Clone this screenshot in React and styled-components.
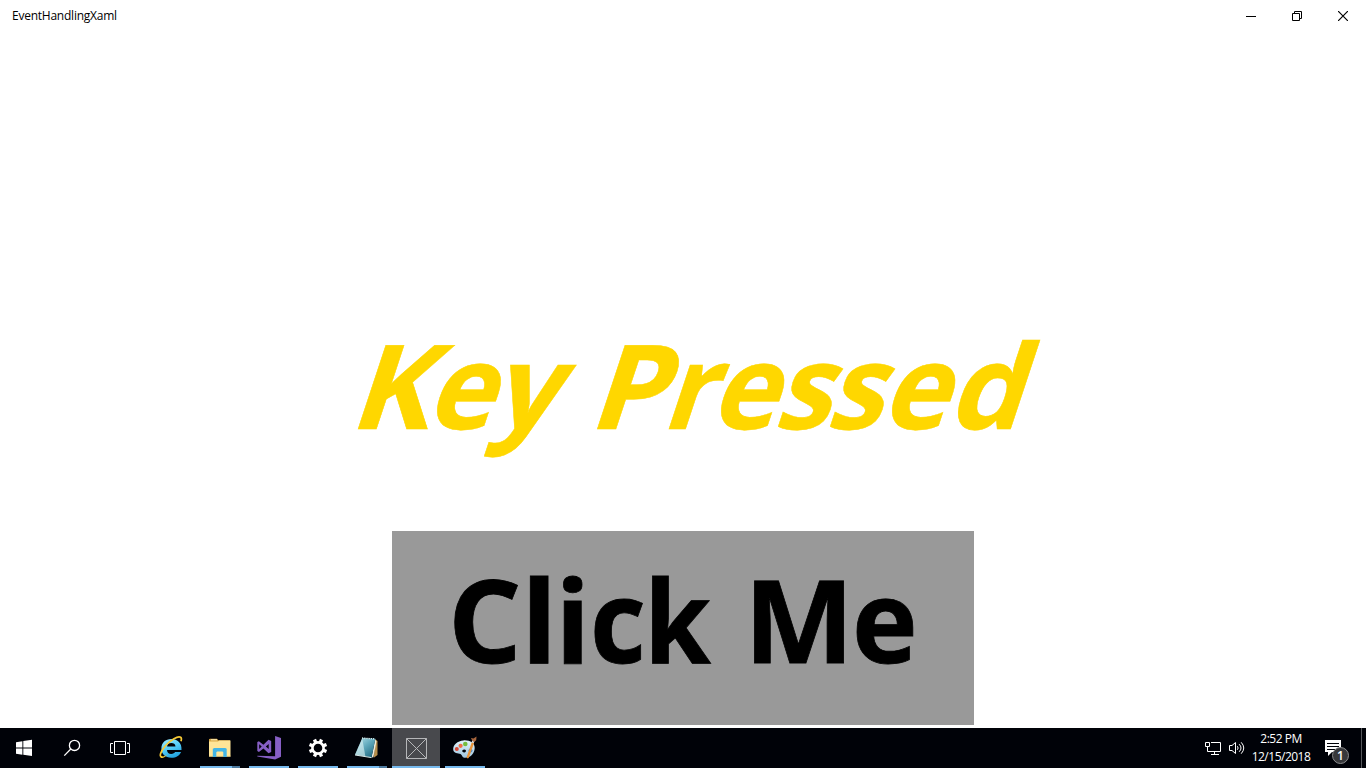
import React from "react";
import styled, { createGlobalStyle } from "styled-components";

const Global = createGlobalStyle`
  body { margin: 0; background: #fff; overflow: hidden; }
  * { box-sizing: border-box; }
`;

const Desktop = styled.div`
  width: 1366px;
  height: 768px;
  display: flex;
  flex-direction: column;
  background: #fff;
  color: #000;
  font-family: "Open Sans", "Noto Sans", sans-serif;
`;

const TitleBar = styled.header`
  height: 32px;
  display: flex;
  justify-content: space-between;
`;

const Title = styled.span`
  padding-left: 12px;
  font-size: 12px;
  line-height: 32px;
  letter-spacing: -0.24px;
`;

const WindowControls = styled.div`
  display: flex;
`;

const WindowButton = styled.div`
  width: 46px;
  height: 32px;
  display: flex;
  align-items: center;
  justify-content: center;
  svg { display: block; }
`;

const Content = styled.main`
  flex: 1;
  display: flex;
  flex-direction: column;
  align-items: center;
  justify-content: flex-end;
  padding-bottom: 3px;
`;

const Message = styled.div`
  width: 666px;
  height: 160px;
  margin-bottom: 67px;
  display: flex;
  line-height: 160px;
  font-size: 117.2px;
  font-weight: 700;
  color: #ffd700;
  white-space: nowrap;
  -webkit-text-stroke: 0.5px #ffd700;
  transform: skewX(-18.3deg);
  transform-origin: 0 117px;
`;

const ClickButton = styled.button`
  width: 582px;
  height: 194px;
  padding: 0 0 0 56px;
  border: 0;
  display: flex;
  align-items: flex-start;
  background: #999;
  color: #000;
  font-family: inherit;
  font-size: 114.5px;
  font-weight: 700;
  line-height: 176px;
  white-space: nowrap;
  -webkit-text-stroke: 0.8px #000;
`;

const Word = styled.span`
  display: block;
  width: ${(p) => p.$width}px;
  text-align: left;
`;

const Letter = styled.span`
  display: inline-block;
  margin-right: ${(p) => p.$kern || 0}px;
  transform: scaleX(${(p) => p.$stretch || 1});
  transform-origin: 0 0;
`;

const Taskbar = styled.footer`
  height: 40px;
  display: flex;
  justify-content: space-between;
  background: #000208;
  color: #fff;
`;

const TaskGroup = styled.div`
  display: flex;
`;

const SystemButton = styled.div`
  width: 48px;
  height: 40px;
  svg { display: block; }
`;

const AppButton = styled.div`
  width: ${(p) => (p.$active ? 48 : 40)}px;
  height: 40px;
  margin-left: ${(p) => p.$gap}px;
  display: flex;
  flex-direction: column;
  justify-content: space-between;
  background: ${(p) => (p.$active ? "#48494d" : "transparent")};
  svg { display: block; }
`;

const Indicator = styled.div`
  height: 2px;
  display: flex;
  background: #76b9ed;
  border-right: ${(p) => (p.$stacked ? "8px solid #4d7a9f" : "0")};
`;

const Tray = styled.div`
  display: flex;
`;

const TrayIcons = styled.div`
  width: 50px;
  svg { display: block; }
`;

const Clock = styled.div`
  width: 66px;
  padding-top: 2px;
  text-align: center;
  font-size: 12px;
  line-height: 18px;
  letter-spacing: -0.5px;
`;

const Notifications = styled.div`
  position: relative;
  width: 45px;
  height: 40px;
  margin-left: 2px;
  svg { display: block; }
`;

const Badge = styled.span`
  position: absolute;
  left: 16px;
  top: 19px;
  width: 17px;
  height: 17px;
  border: 1px solid #8b8c8e;
  border-radius: 50%;
  background: #37383b;
  font-size: 12px;
  font-weight: 600;
  line-height: 15px;
  text-align: center;
`;

const ShowDesktop = styled.div`
  width: 5px;
  height: 40px;
  border-left: 1px solid #55575b;
`;

const WindowsIcon = () => (
  <svg width="48" height="40" fill="#fff">
    <path d="M16 14.2 22.4 13.2V19.4H16zM23.3 13.1 32 11.8V19.4H23.3zM16 20.4H22.4V26.7L16 25.8zM23.3 20.4H32V28L23.3 26.8z" />
  </svg>
);

const SearchIcon = () => (
  <svg width="48" height="40" fill="none" stroke="#fff" strokeWidth="1.3">
    <circle cx="26.5" cy="17.4" r="5.1" />
    <path d="M22.8 21 16.3 27.6" />
  </svg>
);

const TaskViewIcon = () => (
  <svg width="48" height="40" fill="none" stroke="#fff">
    <path d="M18.5 13.5H29.5V26.5H18.5zM17 15.5H14.5V24.5H17M31 15.5H33.5V24.5H31" />
  </svg>
);

const ExplorerIcon = () => (
  <svg width="40" height="38" viewBox="2 0 40 38">
    <defs>
      <linearGradient id="ie" x1="0" y1="0" x2="0.5" y2="1">
        <stop offset="0" stopColor="#a5efff" />
        <stop offset="0.55" stopColor="#55cdf8" />
        <stop offset="1" stopColor="#25a5df" />
      </linearGradient>
    </defs>
    <path fill="url(#ie)" fillRule="evenodd" d="M32.5 22H18C18.2 24.7 19.7 25.9 22.2 25.9C24.3 25.9 25.5 25.1 26.1 24H32.1C30.5 27.9 27 29.8 22.4 29.8C16.2 29.8 12.4 25.9 12.4 20.5C12.4 14.8 16.5 11 22.4 11C28.6 11 33 15 32.5 22zM18.1 18.4H26.5C26.3 16.2 24.6 15.1 22.3 15.1C20 15.1 18.4 16.2 18.1 18.4z" />
    <path fill="none" stroke="#f7ca36" strokeWidth="1.7" d="M13.5 29.1C9.4 29.2 11.4 23.7 16.4 17.8C21.6 11.8 29 7.6 31.6 9.3C32.6 10 32.6 11.5 32 13.2" />
    <path fill="#f7ca36" d="M12 28.2C14.5 29.2 16.7 27.6 18.2 26.8C16.4 28.9 13.9 30.6 11.6 29.7z" />
  </svg>
);

const FolderIcon = () => (
  <svg width="40" height="38">
    <path fill="#dba944" d="M9 12V11.2L10 10.8H17L18.3 12.3H30V15H9z" />
    <path fill="#fff4c5" d="M11 11.3H17V12.3H11z" />
    <path fill="#ffe597" d="M9 13.4H18L19.4 12.4H30.5V28.4H9z" />
    <path fill="#f3d680" d="M9 27.7H30.5V28.6H9z" />
    <path fill="#42b5e6" d="M12.8 20.8 14.3 20H25.3L26.7 20.8V29H23.3V24.2L22.5 23.4H17.2L16.3 24.2V29H12.8z" />
  </svg>
);

const StudioIcon = () => (
  <svg width="40" height="38" fill="#865fc5">
    <path d="M26.1 8 32 10.1V28.8L26.1 31.4 8.3 28.4V27.8L26.1 28.2z" />
    <path fillRule="evenodd" d="M8.3 14.1 9.9 13.2 14.4 16.7 19.5 11.8 22.2 13V24.1L19.5 25.3 14.4 20.5 9.9 23.9 8.3 23zM10.2 16.2V20.9L12.7 18.6zM16.8 18.6 19.7 21V16.1z" />
  </svg>
);

const GearIcon = () => (
  <svg width="40" height="38" fill="none" stroke="#fff">
    <circle cx="20" cy="20" r="5.6" strokeWidth="2.6" />
    {[22.5, 67.5, 112.5, 157.5, 202.5, 247.5, 292.5, 337.5].map((angle) => (
      <path key={angle} d="M20 10.8V14.5" strokeWidth="3.3" transform={`rotate(${angle} 20 20)`} />
    ))}
  </svg>
);

const NotepadIcon = () => (
  <svg width="40" height="38">
    <defs>
      <linearGradient id="pad" x1="0" y1="0" x2="0.8" y2="1">
        <stop offset="0" stopColor="#bce6ed" />
        <stop offset="0.5" stopColor="#61aabd" />
        <stop offset="1" stopColor="#216b83" />
      </linearGradient>
    </defs>
    <path fill="#b68e4d" d="M28 11 30.5 13V27L26.8 29.8z" />
    <path fill="#ececdd" d="M28.2 11.5 29.4 13.5 26.4 29.2 24.5 29.5z" />
    <path fill="url(#pad)" d="M15.2 10 28.4 10.8 24.5 29.6 8 26.8z" />
    <path fill="#e5f6f6" opacity="0.6" d="M11 20 15.3 11 18.4 28.4 8 26.8z" />
    <path stroke="#d7eff1" strokeWidth="1.3" strokeDasharray="1.2 1" d="M15 10 28 10.9" />
    <path stroke="#d8e9e8" strokeWidth="1" d="M8 27 24.5 29.6" />
  </svg>
);

const PlaceholderIcon = () => (
  <svg width="48" height="38" fill="none" stroke="#b5b6b8">
    <path d="M14.5 10.5H34.5V30.5H14.5zM14.5 10.5 34.5 30.5M34.5 10.5 14.5 30.5" />
  </svg>
);

const PaintIcon = () => (
  <svg width="40" height="38">
    <defs>
      <linearGradient id="palette" x1="0" y1="0" x2="0" y2="1">
        <stop offset="0" stopColor="#e2f4fb" />
        <stop offset="1" stopColor="#9fc5df" />
      </linearGradient>
    </defs>
    <path fill="url(#palette)" fillRule="evenodd" d="M8.2 21.5C7.8 16.8 12.5 12.8 18.5 12.4C25 12 29.8 15.2 29.7 20C29.6 25.6 25 30.2 19.5 29.8C17 29.6 17.3 27 15.5 26.1C13 24.8 8.6 25.8 8.2 21.5zM19.4 21.5C17.8 21.4 16.9 22.6 17.3 23.6C17.8 24.8 20.3 24.6 20.8 23.4C21.2 22.4 20.7 21.6 19.4 21.5z" />
    <circle cx="11.8" cy="21.1" r="2" fill="#d94735" />
    <circle cx="15.6" cy="17.8" r="2.1" fill="#f06d43" />
    <circle cx="20.3" cy="16" r="2.3" fill="#75bd3d" />
    <circle cx="25.5" cy="22.6" r="2" fill="#4b8ed1" />
    <path d="M27.8 15 22.8 29.2" stroke="#e9943a" strokeWidth="2.3" strokeLinecap="round" />
    <path d="M27.6 14.8 29 11.5" stroke="#d3dbe0" strokeWidth="2.2" />
    <path d="M27.2 12.5 25.9 9.9 28.5 10.4 31.5 8.6 31.2 12.3 29 14z" fill="#a7663e" />
  </svg>
);

const TrayGlyphs = () => (
  <svg width="50" height="40" viewBox="0 0 50 40" fill="none" stroke="#fff">
    <path d="M13 14.5H22.5V23.5H9.5V19M16.5 24V26.5M13 26.5H21" />
    <path d="M7.5 14.5H11.5V18.5H7.5z" />
    <path d="M31.5 17.5H34L37.5 14.5V25.5L34 22.5H31.5z" />
    <path d="M39.3 18.2Q41 20 39.3 21.8M41.2 16.2Q44.8 20 41.2 23.8M43.2 14.3Q48.3 20 43.2 25.7" />
  </svg>
);

const MessageIcon = () => (
  <svg width="40" height="40">
    <path fill="#fff" d="M9 12H25V24H16L12 28V24H9z" />
    <path stroke="#000208" d="M11 15.5H23M11 18.5H23M11 21.5H19" />
  </svg>
);

const apps = [
  { name: "explorer", Icon: ExplorerIcon, gap: 7, idle: true },
  { name: "folder", Icon: FolderIcon, gap: 9, stacked: true },
  { name: "studio", Icon: StudioIcon, gap: 9 },
  { name: "settings", Icon: GearIcon, gap: 9 },
  { name: "notepad", Icon: NotepadIcon, gap: 9, stacked: true },
  { name: "app", Icon: PlaceholderIcon, gap: 5, active: true },
  { name: "paint", Icon: PaintIcon, gap: 5 },
];

// Each letter is [character, kerning after it, horizontal stretch].
const messageWords = [
  { width: 239, letters: [["K", -1.2, 1.03], ["e", -3.8, 0.97], ["y", 0, 0.99]] },
  {
    width: 427,
    letters: [
      ["P", 0.2, 1.05], ["r", -5.3, 0.95], ["e", -4.8, 0.96], ["s", -6.8, 0.96],
      ["s", -2.8, 0.96], ["e", -3.3, 0.96], ["d", 0, 1],
    ],
  },
];

const buttonWords = [
  { width: 295.5, letters: [["C", 0, 1.01], ["l", -0.7, 1.04], ["i", -0.7, 1], ["c", -4.5, 0.95], ["k", 0, 0.94]] },
  { width: 180, letters: [["M", 0.5, 1.02], ["e", 0, 0.97]] },
];

const Words = ({ words }) =>
  words.map(({ width, letters }, index) => (
    <Word key={index} $width={width}>
      {letters.map(([character, kern, stretch], position) => (
        <Letter key={position} $kern={kern} $stretch={stretch}>{character}</Letter>
      ))}
    </Word>
  ));

export default function App() {
  return (
    <Desktop>
      <Global />
      <TitleBar>
        <Title>EventHandlingXaml</Title>
        <WindowControls>
          <WindowButton>
            <svg width="10" height="10" stroke="#000"><path d="M0 5.5H10" /></svg>
          </WindowButton>
          <WindowButton>
            <svg width="10" height="10" fill="none" stroke="#000"><path d="M.5 2.5H7.5V9.5H.5zM2.5 2.5V.5H9.5V7.5H7.5" /></svg>
          </WindowButton>
          <WindowButton>
            <svg width="10" height="10" stroke="#000" strokeWidth="1.2"><path d="M0 0 10 10M10 0 0 10" /></svg>
          </WindowButton>
        </WindowControls>
      </TitleBar>
      <Content>
        <Message>
          <Words words={messageWords} />
        </Message>
        <ClickButton>
          <Words words={buttonWords} />
        </ClickButton>
      </Content>
      <Taskbar>
        <TaskGroup>
          <SystemButton><WindowsIcon /></SystemButton>
          <SystemButton><SearchIcon /></SystemButton>
          <SystemButton><TaskViewIcon /></SystemButton>
          {apps.map(({ name, Icon, gap, active, idle, stacked }) => (
            <AppButton key={name} $gap={gap} $active={active}>
              <Icon />
              {!idle && <Indicator $stacked={stacked} />}
            </AppButton>
          ))}
        </TaskGroup>
        <Tray>
          <TrayIcons><TrayGlyphs /></TrayIcons>
          <Clock>
            <div>2:52 PM</div>
            <div>12/15/2018</div>
          </Clock>
          <Notifications>
            <MessageIcon />
            <Badge>1</Badge>
          </Notifications>
          <ShowDesktop />
        </Tray>
      </Taskbar>
    </Desktop>
  );
}
